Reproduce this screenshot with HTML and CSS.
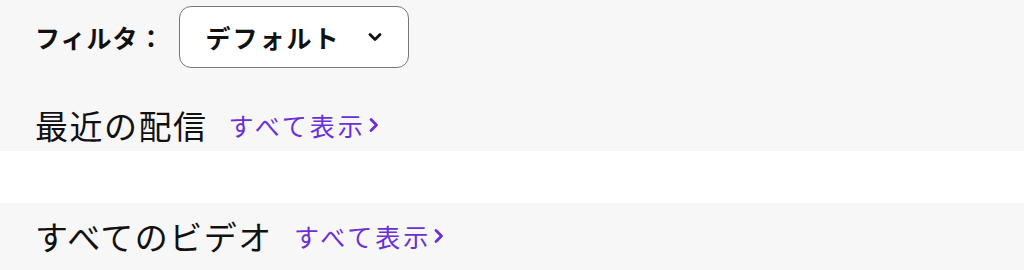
FILE: index.html
```html
<!DOCTYPE html>
<html lang="ja">
<head>
    <meta charset="UTF-8">
    <meta name="viewport" content="width=device-width, initial-scale=1.0">
    <title>配信</title>
    <link rel="stylesheet" href="styles.css">
</head>
<body>
    <div class="panel">
        <div class="toolbar">
            <span class="filter-label">フィルタ：</span>
            <button class="dropdown">
                <span>デフォルト</span>
                <svg class="caret" width="16" height="10" viewBox="0 0 16 10"><path d="M3 2.5l5 5 5-5" fill="none" stroke="#111" stroke-width="2.8" stroke-linecap="round" stroke-linejoin="round"/></svg>
            </button>
        </div>
        <div class="section-head first">
            <h2>最近の配信</h2>
            <a class="see-all" href="#">すべて表示
                <svg width="12" height="18" viewBox="0 0 12 18"><path d="M3 3.5l5.5 5.5-5.5 5.5" fill="none" stroke="currentColor" stroke-width="2.8" stroke-linecap="round" stroke-linejoin="round"/></svg>
            </a>
        </div>
    </div>

    <div class="gap"></div>

    <div class="panel">
        <div class="section-head">
            <h2>すべてのビデオ</h2>
            <a class="see-all" href="#">すべて表示
                <svg width="12" height="18" viewBox="0 0 12 18"><path d="M3 3.5l5.5 5.5-5.5 5.5" fill="none" stroke="currentColor" stroke-width="2.8" stroke-linecap="round" stroke-linejoin="round"/></svg>
            </a>
        </div>
    </div>
</body>
</html>
```

FILE: styles.css
```css
body {
    margin: 0;
    background: #fff;
    font-family: "Noto Sans CJK JP", "Noto Sans", sans-serif;
    color: #111;
}
.panel {
    background: #f7f7f7;
    padding: 0 35px;
}
.toolbar {
    display: flex;
    align-items: center;
    gap: 14px;
    padding-top: 6px;
}
.filter-label {
    font-size: 25px;
    font-weight: bold;
    letter-spacing: 1px;
}
.dropdown {
    display: flex;
    align-items: center;
    gap: 26px;
    height: 62px;
    padding: 0 25px 0 26px;
    background: #fff;
    border: 1.5px solid #777;
    border-radius: 12px;
    font-family: inherit;
    font-size: 25px;
    font-weight: bold;
    letter-spacing: 2px;
    color: #111;
}
.section-head {
    display: flex;
    align-items: center;
    gap: 21px;
    height: 40px;
    padding: 13px 0 17px;
}
.section-head.first {
    padding: 37px 0 6px;
}
.section-head h2 {
    margin: 0;
    font-size: 33px;
    font-weight: normal;
    letter-spacing: 1.5px;
    line-height: 40px;
}
.see-all {
    display: flex;
    align-items: center;
    gap: 2px;
    font-size: 25px;
    letter-spacing: 3px;
    color: #6a2fd6;
    text-decoration: none;
}
.gap {
    height: 52px;
}
```
